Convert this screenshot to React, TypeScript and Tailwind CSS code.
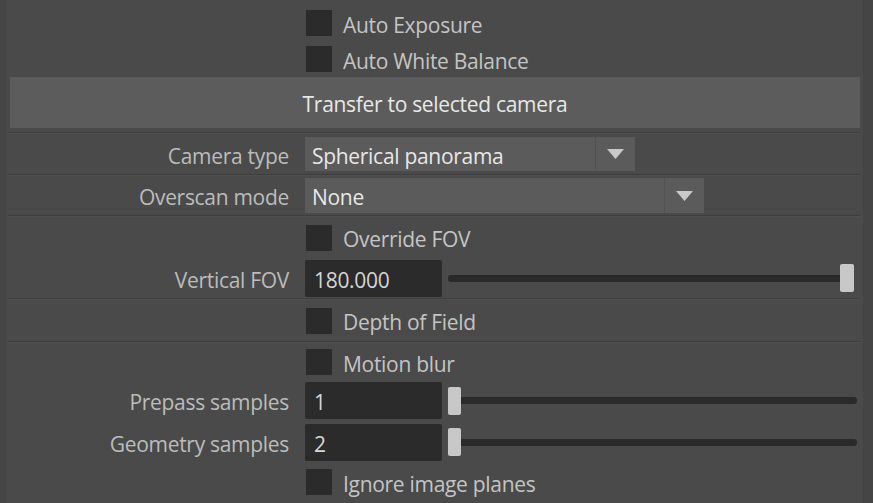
import React from "react";

const font = { fontFamily: '"Open Sans", "Noto Sans", sans-serif' };

function Check({ label }: { label: string }) {
  return (
    <div className="flex items-center gap-[11px] pl-[1px]">
      <div className="w-[26px] h-[26px] bg-[#2b2b2b]" />
      <span className="text-[21px] text-[#c4c4c4] tracking-[-0.3px] leading-none pt-[4px]">{label}</span>
    </div>
  );
}

function Sep() {
  return (
    <div className="ml-[2px] mr-[3px] flex flex-col">
      <div className="h-px bg-[#3e3e3e]" />
      <div className="h-px bg-[#4f4f4f]" />
    </div>
  );
}

function Row({ label, h, children }: { label?: string; h: string; children: React.ReactNode }) {
  return (
    <div className={`flex items-center ${h}`}>
      <div className="w-[299px] shrink-0 pr-[16px] text-right text-[21px] text-[#bcbcbc] tracking-[-0.3px] leading-none pt-[4px]">{label}</div>
      <div className="flex-1 flex items-center">{children}</div>
    </div>
  );
}

function Dropdown({ value, w, h }: { value: string; w: string; h: string }) {
  return (
    <div className={`flex ${h} ${w} bg-[#5b5b5b]`}>
      <div className="flex-1 flex items-center pl-[7px] text-[21px] text-[#e8e8e8] tracking-[-0.3px] leading-none pt-[4px]">{value}</div>
      <div className="w-px bg-[#525252]" />
      <div className="w-[39px] flex items-center justify-center">
        <svg width="17" height="10" viewBox="0 0 17 10">
          <polygon points="0,0 17,0 8.5,10" fill="#c9c9c9" />
        </svg>
      </div>
    </div>
  );
}

function NumSlider({ value, handleAtEnd, trackW }: { value: string; handleAtEnd?: boolean; trackW: string }) {
  return (
    <div className="flex items-center w-full">
      <div className="w-[137px] h-[37px] bg-[#2b2b2b] rounded-[2px] flex items-center pl-[9px] text-[21px] text-[#d6d6d6] tracking-[-0.3px] leading-none pt-[4px]">
        {value}
      </div>
      <div className={`ml-[6px] ${trackW} relative h-[28px] flex items-center`}>
        <div className="w-full h-[7px] bg-[#2a2a2a] rounded-[3px]" />
        {handleAtEnd ? (
          <div className="absolute right-[-7px] top-0 w-[14px] h-[28px] bg-[#c8c8c8] rounded-[2px]" />
        ) : (
          <div className="absolute left-0 top-0 w-[13px] h-[28px] bg-[#c8c8c8] rounded-[2px]" />
        )}
      </div>
    </div>
  );
}

export default function App() {
  return (
    <div className="w-[873px] h-[503px] bg-[#454545] overflow-hidden" style={font}>
      <div className="h-full bg-[#4a4a4a] ml-[6px] mr-[10px] pt-[5px] flex flex-col">
        <Row h="h-[36px]"><Check label="Auto Exposure" /></Row>
        <Row h="h-[36px]"><Check label="Auto White Balance" /></Row>
        <div className="h-[51px] ml-[4px] mr-[3px] bg-[#5c5c5c] flex items-center justify-center text-[21px] text-[#e8e8e8] tracking-[-0.3px] leading-none pt-[4px]">
          Transfer to selected camera
        </div>
        <div className="h-[4px] shrink-0" />
        <Sep />
        <Row label="Camera type" h="h-[40px]"><Dropdown value="Spherical panorama" w="w-[330px]" h="h-[34px]" /></Row>
        <Sep />
        <Row label="Overscan mode" h="h-[39px]"><Dropdown value="None" w="w-[399px]" h="h-[35px]" /></Row>
        <Sep />
        <Row h="h-[41px]"><Check label="Override FOV" /></Row>
        <Row label="Vertical FOV" h="h-[40px]"><NumSlider value="180.000" handleAtEnd trackW="w-[399px]" /></Row>
        <Sep />
        <Row h="h-[41px]"><Check label="Depth of Field" /></Row>
        <Sep />
        <Row h="h-[38px]"><Check label="Motion blur" /></Row>
        <Row label="Prepass samples" h="h-[39px]"><NumSlider value="1" trackW="w-[409px]" /></Row>
        <Row label="Geometry samples" h="h-[44px]"><NumSlider value="2" trackW="w-[409px]" /></Row>
        <Row h="h-[36px]"><Check label="Ignore image planes" /></Row>
      </div>
    </div>
  );
}
